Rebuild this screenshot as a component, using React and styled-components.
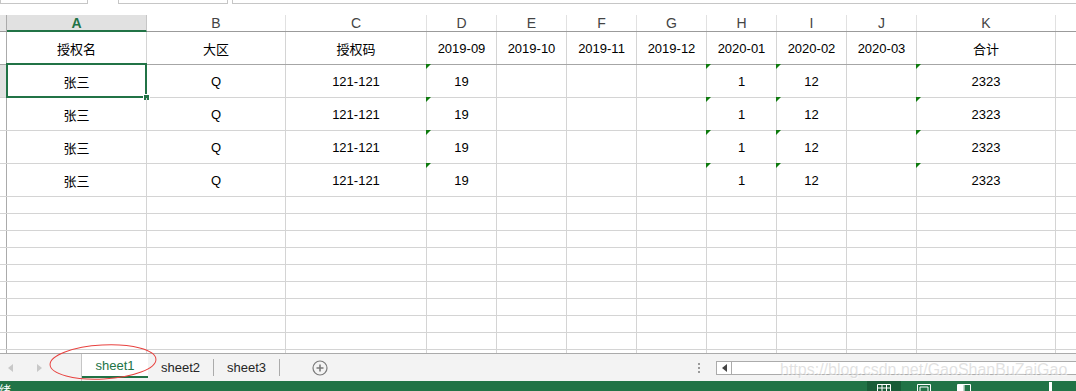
import React from "react";
import styled, { createGlobalStyle } from "styled-components";

const GREEN = "#217346";
const GRID = "#d4d4d4";
const COLS = [7, 140, 139, 141, 70, 70, 70, 70, 70, 70, 70, 139, 40];
const LETTERS = ["A", "B", "C", "D", "E", "F", "G", "H", "I", "J", "K", ""];
const HEAD = ["授权名", "大区", "授权码", "2019-09", "2019-10", "2019-11", "2019-12", "2020-01", "2020-02", "2020-03", "合计", ""];
const DATA = ["张三", "Q", "121-121", "19", "", "", "", "1", "12", "", "2323", ""];
const FLAGGED = [3, 7, 8, 10];

const GlobalStyle = createGlobalStyle`
    body {
        margin: 0;
        background: #fff;
        font-family: "Liberation Sans", "Noto Sans CJK SC", sans-serif;
    }
`;

const App = () => {
    return (
        <Page>
            <GlobalStyle />
            <TopStrip>
                <TopBox $w={88} />
                <TopBox $w={110} $ml={30} />
                <TopBox $w={850} $ml={4} />
            </TopStrip>

            <Sheet>
                <HeaderRow>
                    <Corner $w={COLS[0]} />
                    {LETTERS.map((l, i) => (
                        <ColHead key={i} $w={COLS[i + 1]} $active={i === 0}>{l}</ColHead>
                    ))}
                </HeaderRow>

                <Row $h={33} $dark>
                    <RowHead $w={COLS[0]} />
                    {HEAD.map((t, i) => (
                        <Cell key={i} $w={COLS[i + 1]}>{t}</Cell>
                    ))}
                </Row>

                {[0, 1, 2, 3].map((r) => (
                    <Row key={r} $h={33}>
                        <RowHead $w={COLS[0]} $active={r === 0} />
                        {DATA.map((t, i) => (
                            <Cell key={i} $w={COLS[i + 1]} $flag={FLAGGED.includes(i)}>
                                {t}
                                {r === 0 && i === 0 && (
                                    <Selection>
                                        <FillHandle />
                                    </Selection>
                                )}
                            </Cell>
                        ))}
                    </Row>
                ))}

                {Array.from({ length: 10 }).map((_, r) => (
                    <Row key={"e" + r} $h={17}>
                        <RowHead $w={COLS[0]} />
                        {DATA.map((_, i) => (
                            <Cell key={i} $w={COLS[i + 1]} />
                        ))}
                    </Row>
                ))}
            </Sheet>

            <TabBar>
                <Arrows>
                    <Arrow viewBox="0 0 6 8"><path d="M5 0 L0 4 L5 8 Z" /></Arrow>
                    <Arrow viewBox="0 0 6 8"><path d="M1 0 L6 4 L1 8 Z" /></Arrow>
                </Arrows>
                <Tab $active>sheet1</Tab>
                <Tab>sheet2</Tab>
                <TabDivider />
                <Tab>sheet3</Tab>
                <TabDivider />
                <AddButton viewBox="0 0 16 16">
                    <circle cx="8" cy="8" r="7" fill="none" stroke="#7a7a7a" strokeWidth="1.2" />
                    <path d="M8 4.5 V11.5 M4.5 8 H11.5" stroke="#7a7a7a" strokeWidth="1.6" />
                </AddButton>
                <Spacer />
                <Dots>
                    <span /><span /><span />
                </Dots>
                <ScrollBox>
                    <ScrollArrow>
                        <svg width="5" height="8" viewBox="0 0 5 8"><path d="M5 0 L0 4 L5 8 Z" fill="#444" /></svg>
                    </ScrollArrow>
                </ScrollBox>
                <Ellipse viewBox="0 0 112 40">
                    <ellipse cx="56" cy="20" rx="53" ry="17" fill="none" stroke="#e8423f" strokeWidth="1" transform="rotate(-3 56 20)" />
                </Ellipse>
                <Watermark>https://blog.csdn.net/GaoShanBuZaiGao</Watermark>
            </TabBar>

            <StatusBar>
                <StatusText>就绪</StatusText>
                <Spacer />
                <ViewButton $active>
                    <svg width="14" height="12" viewBox="0 0 14 12">
                        <path d="M0.5 0.5 H13.5 V11.5 H0.5 Z M0.5 4 H13.5 M0.5 7.5 H13.5 M5 0.5 V11.5 M9.5 0.5 V11.5" fill="none" stroke="#fff" />
                    </svg>
                </ViewButton>
                <ViewButton>
                    <svg width="14" height="12" viewBox="0 0 14 12">
                        <path d="M0.5 0.5 H13.5 V11.5 H0.5 Z M3 3 H11 V11.5 H3 Z" fill="none" stroke="#fff" />
                    </svg>
                </ViewButton>
                <ViewButton>
                    <svg width="14" height="12" viewBox="0 0 14 12">
                        <path d="M0.5 0.5 H13.5 V11.5 H0.5 Z M7 0.5 V11.5" fill="none" stroke="#fff" />
                        <rect x="1" y="1" width="5.5" height="11" fill="#fff" />
                    </svg>
                </ViewButton>
                <ZoomMark />
            </StatusBar>
        </Page>
    );
};

const Page = styled.div`
    position: relative;
    width: 1076px;
    height: 391px;
    overflow: hidden;
    display: flex;
    flex-direction: column;
    background: #fff;
`;

const TopStrip = styled.div`
    height: 15px;
    display: flex;
    align-items: flex-start;
    flex-shrink: 0;
`;

const TopBox = styled.div`
    width: ${(p) => p.$w}px;
    margin-left: ${(p) => p.$ml || 0}px;
    height: 5px;
    margin-top: -1px;
    border: 1px solid #c6c6c6;
    box-sizing: border-box;
    flex-shrink: 0;
`;

const Sheet = styled.div`
    height: 338px;
    overflow: hidden;
    flex-shrink: 0;
`;

const HeaderRow = styled.div`
    display: flex;
    height: 17px;
    border-bottom: 1px solid #9b9b9b;
    box-sizing: border-box;
`;

const Corner = styled.div`
    width: ${(p) => p.$w}px;
    flex-shrink: 0;
    box-sizing: border-box;
    border-right: 1px solid #ababab;
    background: #e6e6e6;
`;

const ColHead = styled.div`
    width: ${(p) => p.$w}px;
    flex-shrink: 0;
    box-sizing: border-box;
    display: flex;
    align-items: center;
    justify-content: center;
    font-size: 14px;
    line-height: 16px;
    color: ${(p) => (p.$active ? GREEN : "#444")};
    font-weight: ${(p) => (p.$active ? "bold" : "normal")};
    background: ${(p) => (p.$active ? "#e1e1e1" : "#fff")};
    border-right: 1px solid ${(p) => (p.$active ? "#c6c6c6" : "#e1e1e1")};
    border-bottom: ${(p) => (p.$active ? `2px solid ${GREEN}` : "none")};
    margin-bottom: ${(p) => (p.$active ? "-1px" : "0")};
`;

const Row = styled.div`
    display: flex;
    height: ${(p) => p.$h}px;
    box-sizing: border-box;
    border-bottom: 1px solid ${(p) => (p.$dark ? "#a6a6a6" : GRID)};
`;

const RowHead = styled.div`
    width: ${(p) => p.$w}px;
    flex-shrink: 0;
    box-sizing: border-box;
    border-right: 1px solid ${(p) => (p.$active ? GREEN : "#ababab")};
    background: ${(p) => (p.$active ? "#e1e1e1" : "#fff")};
`;

const Cell = styled.div`
    position: relative;
    width: ${(p) => p.$w}px;
    flex-shrink: 0;
    box-sizing: border-box;
    border-right: 1px solid ${GRID};
    display: flex;
    align-items: center;
    justify-content: center;
    font-size: 13px;
    color: #000;
    font-family: "Liberation Sans", "Noto Sans CJK SC", sans-serif;

    &::before {
        content: "";
        display: ${(p) => (p.$flag ? "block" : "none")};
        position: absolute;
        left: -1px;
        top: -1px;
        border-top: 5px solid #0f7b0f;
        border-right: 5px solid transparent;
    }
`;

const Selection = styled.div`
    position: absolute;
    left: -1px;
    top: -2px;
    right: -1px;
    bottom: -1px;
    border: 2px solid ${GREEN};
    pointer-events: none;
`;

const FillHandle = styled.div`
    position: absolute;
    right: -5px;
    bottom: -5px;
    width: 5px;
    height: 5px;
    background: ${GREEN};
    border: 1px solid #fff;
`;

const TabBar = styled.div`
    position: relative;
    height: 28px;
    flex-shrink: 0;
    box-sizing: border-box;
    border-top: 1px solid #ababab;
    background: #f3f3f3;
    display: flex;
    align-items: stretch;
    font-family: "Liberation Sans", sans-serif;
`;

const Arrows = styled.div`
    width: 82px;
    display: flex;
    align-items: center;
    gap: 22px;
    padding-left: 8px;
    box-sizing: border-box;
    border-right: 1px solid #c6c6c6;
`;

const Arrow = styled.svg`
    width: 6px;
    height: 8px;
    fill: #c8c8c8;
`;

const Tab = styled.div`
    display: flex;
    align-items: center;
    justify-content: center;
    box-sizing: border-box;
    font-size: 13px;
    height: ${(p) => (p.$active ? "24px" : "auto")};
    width: ${(p) => (p.$active ? "66px" : "auto")};
    padding: ${(p) => (p.$active ? "0" : "0 13px 0 13px")};
    color: ${(p) => (p.$active ? GREEN : "#262626")};
    background: ${(p) => (p.$active ? "#fff" : "transparent")};
    border-bottom: ${(p) => (p.$active ? `2px solid ${GREEN}` : "none")};
`;

const TabDivider = styled.div`
    width: 1px;
    background: #ababab;
    margin: 5px 0 5px;
`;

const AddButton = styled.svg`
    width: 16px;
    height: 16px;
    align-self: center;
    margin-left: 32px;
`;

const Spacer = styled.div`
    flex: 1;
`;

const Dots = styled.div`
    display: flex;
    flex-direction: column;
    justify-content: center;
    gap: 2px;
    margin-right: 16px;

    span {
        width: 2px;
        height: 2px;
        background: #9a9a9a;
    }
`;

const ScrollBox = styled.div`
    width: 362px;
    height: 14px;
    align-self: center;
    margin-top: 1px;
    margin-right: -2px;
    box-sizing: border-box;
    border: 1px solid #ababab;
    background: #fff;
    display: flex;
`;

const ScrollArrow = styled.div`
    width: 15px;
    box-sizing: border-box;
    border-right: 1px solid #ababab;
    display: flex;
    align-items: center;
    justify-content: center;
`;

const Ellipse = styled.svg`
    position: absolute;
    left: 47px;
    top: -12px;
    width: 112px;
    height: 40px;
    pointer-events: none;
`;

const Watermark = styled.div`
    position: absolute;
    left: 780px;
    top: 7px;
    font-size: 16px;
    color: rgba(200, 200, 200, 0.55);
    text-shadow: 1px 1px 0 rgba(255, 255, 255, 0.6);
    white-space: nowrap;
    pointer-events: none;
`;

const StatusBar = styled.div`
    height: 22px;
    flex-shrink: 0;
    background: ${GREEN};
    display: flex;
    align-items: flex-start;
    font-family: "Noto Sans CJK SC", sans-serif;
    padding-right: 24px;
`;

const StatusText = styled.div`
    color: #fff;
    font-size: 12px;
    line-height: 16px;
    margin-left: -13px;
    margin-top: 1px;
`;

const ViewButton = styled.div`
    width: 34px;
    height: 22px;
    margin-right: 6px;
    display: flex;
    justify-content: center;
    padding-top: 3px;
    box-sizing: border-box;
    background: ${(p) => (p.$active ? "#185c37" : "transparent")};
`;

const ZoomMark = styled.div`
    width: 3px;
    height: 14px;
    margin-top: 1px;
    margin-left: 62px;
    background: #fff;
`;

export default App;
